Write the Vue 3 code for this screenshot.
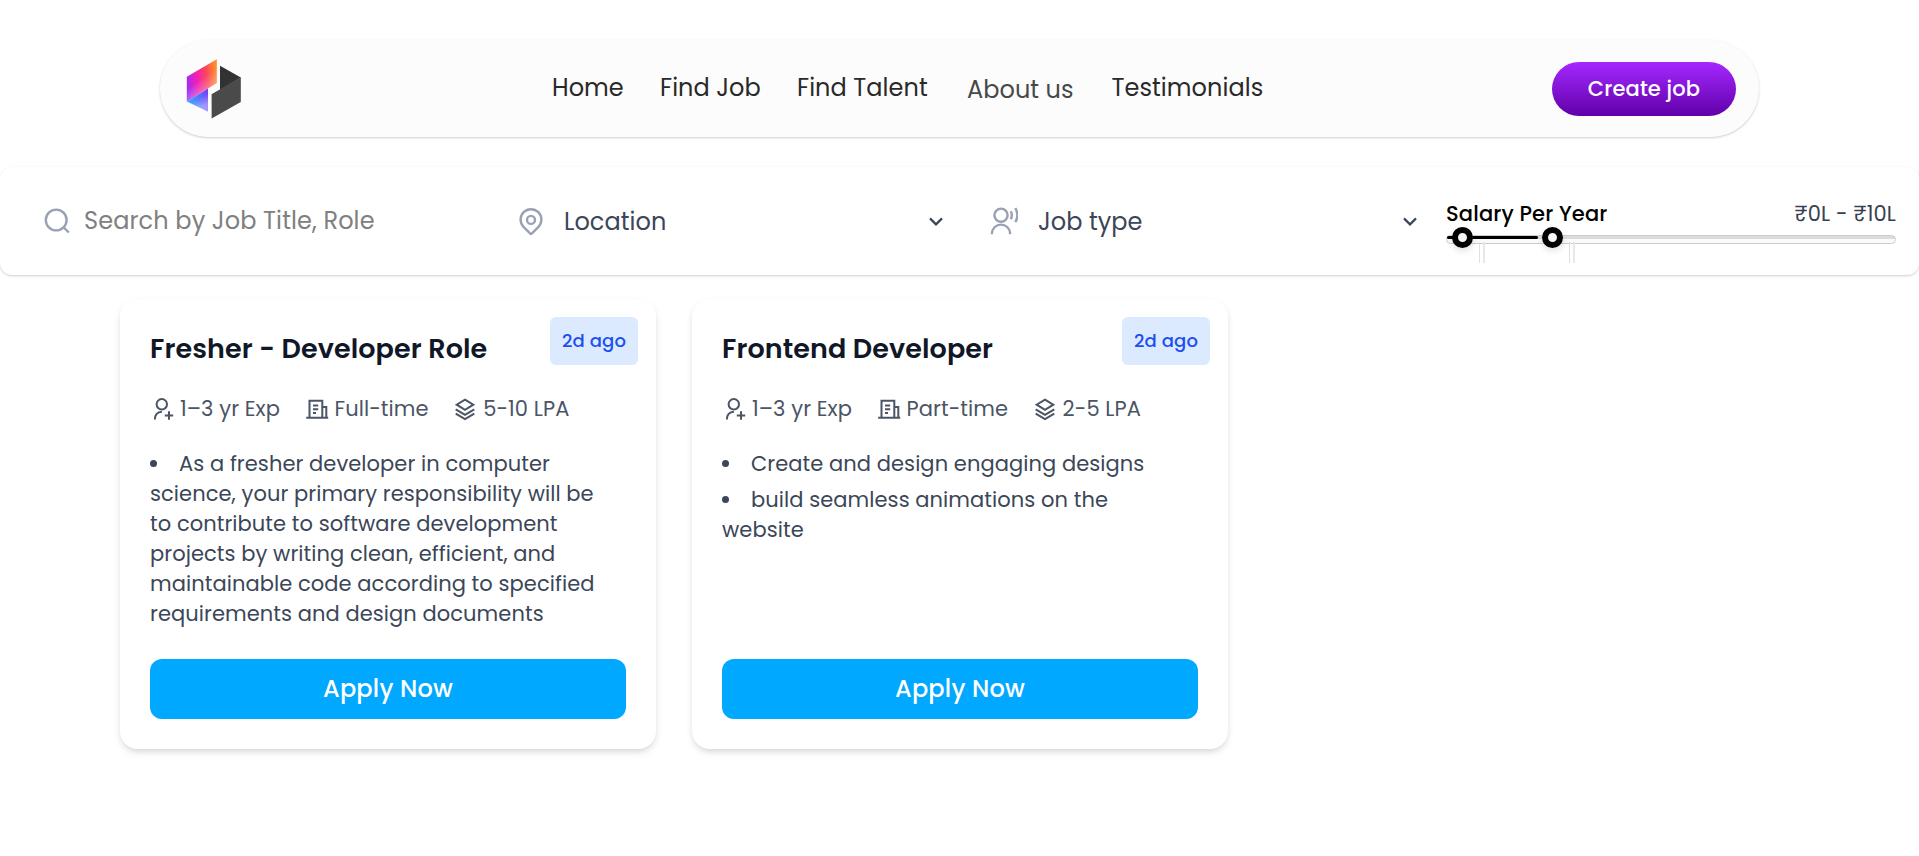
<script setup>
const links = [
  { label: 'Home' },
  { label: 'Find Job' },
  { label: 'Find Talent' },
  { label: 'About us', fading: true },
  { label: 'Testimonials' },
]

const salary = { low: 16.5, high: 106.5, fill: 91 }

const jobs = [
  {
    title: 'Fresher - Developer Role',
    exp: '1–3 yr Exp',
    type: 'Full-time',
    pay: '5-10 LPA',
    points: [
      'As a fresher developer in computer science, your primary responsibility will be to contribute to software development projects by writing clean, efficient, and maintainable code according to specified requirements and design documents',
    ],
  },
  {
    title: 'Frontend Developer',
    exp: '1–3 yr Exp',
    type: 'Part-time',
    pay: '2-5 LPA',
    points: ['Create and design engaging designs', 'build seamless animations on the website'],
  },
]
</script>

<template>
  <div class="page">
    <header class="navbar">
      <svg class="logo" viewBox="0 0 56 62">
        <defs>
          <linearGradient id="warm" x1="0" y1="0.6" x2="1" y2="0.35">
            <stop offset="0" stop-color="#a02cf5" />
            <stop offset="0.35" stop-color="#f31fb4" />
            <stop offset="0.68" stop-color="#fb4658" />
            <stop offset="1" stop-color="#ff8a2b" />
          </linearGradient>
          <linearGradient id="sheen" x1="0.2" y1="0.2" x2="0.55" y2="0.9">
            <stop offset="0.45" stop-color="#fff" stop-opacity="0" />
            <stop offset="1" stop-color="#fff" stop-opacity="0.4" />
          </linearGradient>
          <linearGradient id="cool" x1="0" y1="0.5" x2="1" y2="0.4">
            <stop offset="0" stop-color="#35b0ff" />
            <stop offset="0.6" stop-color="#5872ff" />
            <stop offset="1" stop-color="#7440fa" />
          </linearGradient>
        </defs>
        <path d="M.8 18.7 30.8 1.3V25L.8 43.5Z" fill="url(#warm)" />
        <path d="M.8 18.7 30.8 1.3V25L.8 43.5Z" fill="url(#sheen)" />
        <path d="M.8 43.5 22 30.6v23Z" fill="url(#cool)" />
        <path d="M.8 43.5 22 30.6v23Z" fill="url(#sheen)" />
        <path d="M34 7.8 54.8 19.5 34 32Z" fill="#323232" />
        <path d="M25.6 36.3 54.8 19.3v24.6L25.6 60.4Z" fill="#4a4a4a" />
      </svg>
      <nav class="links">
        <a v-for="l in links" :key="l.label" :class="{ fading: l.fading }">{{ l.label }}</a>
      </nav>
      <button class="create">Create job</button>
    </header>

    <section class="filters">
      <div class="field search">
        <svg class="ico" viewBox="0 0 28 28"><circle cx="13.2" cy="13" r="10.4" /><path d="m20.8 20.5 5 5" /></svg>
        <span class="hint">Search by Job Title, Role</span>
      </div>
      <div class="field location">
        <svg class="ico" viewBox="0 0 28 28"><path d="M14 27.3 6.5 19.8a10.4 10.4 0 1 1 15 0Z" /><circle cx="14" cy="12.9" r="4" /></svg>
        <span class="label">Location</span>
        <svg class="chev" viewBox="0 0 14 9"><path d="m1 1.4 6 6 6-6" /></svg>
      </div>
      <div class="field type">
        <svg class="ico" viewBox="0 0 28 28"><circle cx="11" cy="8.2" r="6.6" /><path d="M1.9 27.3v-.6a9.1 9.1 0 0 1 18.2 0v.6M20.8 4.2q2 4 0 8M25.3 1.2q4.2 7 0 14" /></svg>
        <span class="label">Job type</span>
        <svg class="chev" viewBox="0 0 14 9"><path d="m1 1.4 6 6 6-6" /></svg>
      </div>
      <div class="salary">
        <div class="salary-head">
          <span class="name">Salary Per Year</span>
          <span class="range">₹0L - ₹10L</span>
        </div>
        <div class="slider">
          <i class="fill" :style="{ width: salary.fill + 'px' }"></i>
          <i v-for="x in [salary.low, salary.high]" :key="x" class="thumb" :style="{ left: x + 'px' }"></i>
          <i v-for="x in [salary.low, salary.high]" :key="'t' + x" class="tick" :style="{ left: x + 15.5 + 'px' }"></i>
        </div>
      </div>
    </section>

    <main class="cards">
      <article v-for="job in jobs" :key="job.title" class="card">
        <span class="age">2d ago</span>
        <h2>{{ job.title }}</h2>
        <div class="meta">
          <span class="item">
            <svg viewBox="0 0 24 24"><circle cx="11.8" cy="7.3" r="5.2" /><path d="M4.900 22.600c0-4.600 2.600-7.700 7-7.900M19 14.300v8.400M14.800 18.500h8.400" /></svg>
            {{ job.exp }}
          </span>
          <span class="item">
            <svg viewBox="0 0 24 24"><path d="M1.200 20.800h22M4.500 20V3.800h12.800V20M17.300 10h4V20M8 8.400h5.200M8 12.200h5.200M8 16h3" /></svg>
            {{ job.type }}
          </span>
          <span class="item">
            <svg viewBox="0 0 24 24"><path d="m12 2.600 8.300 5.100L12 12.800 3.700 7.700ZM2.700 12.400l9.300 5.500 9.300-5.500M2.700 16.600l9.300 5.500 9.300-5.500" /></svg>
            {{ job.pay }}
          </span>
        </div>
        <ul>
          <li v-for="point in job.points" :key="point">{{ point }}</li>
        </ul>
        <button class="apply">Apply Now</button>
      </article>
    </main>
  </div>
</template>

<style>
body {
  background: #fff;
}
</style>

<style scoped>
.page {
  box-sizing: border-box;
  height: 856px;
  padding-top: 40px;
  overflow: hidden;
  background: #fff;
  font-family: Poppins, Inter, "Noto Sans", sans-serif;
}
button {
  border: 0;
  padding: 0;
  font-family: inherit;
  color: #fff;
}
.navbar {
  display: flex;
  align-items: center;
  box-sizing: border-box;
  height: 97px;
  margin: 0 160px;
  padding: 0 23px 0 26px;
  border-radius: 49px;
  background: #fcfcfc;
  box-shadow: 0 1px 3px rgba(0, 0, 0, 0.1), 0 1px 2px rgba(0, 0, 0, 0.1);
}
.logo {
  width: 56px;
  height: 62px;
}
.links {
  display: grid;
  grid-template-columns: 108px 137px 170px 144.5px 160px;
  margin-left: 310px;
}
.links a {
  margin: -1px 0 1px;
  font-size: 24px;
  line-height: 36px;
  letter-spacing: 0.06px;
  color: #292929;
  white-space: nowrap;
}
.links a.fading {
  margin: 1px 0 -1px;
  color: #484848;
}
.create {
  width: 184px;
  height: 54px;
  margin-left: auto;
  border-radius: 27px;
  background: linear-gradient(#a528ff, #6000a8);
  font-size: 21px;
  font-weight: 500;
  letter-spacing: 0.15px;
}
.filters {
  display: grid;
  grid-template-columns: 474px 472px 457px 450px;
  box-sizing: border-box;
  height: 108px;
  margin-top: 30px;
  padding-left: 43px;
  border-radius: 12px;
  background: #fff;
  box-shadow: 0 1px 3px rgba(0, 0, 0, 0.1), 0 1px 2px rgba(0, 0, 0, 0.1);
}
.field {
  display: flex;
  align-items: center;
}
.ico {
  width: 28px;
  height: 28px;
  fill: none;
  stroke: #98a2b3;
  stroke-width: 2.4;
}
.hint,
.label {
  font-size: 24px;
  line-height: 36px;
  white-space: nowrap;
}
.hint {
  margin: -1px 0 0 13px;
  color: #808080;
  letter-spacing: 0.12px;
}
.label {
  margin-top: 1px;
  color: #3b4658;
  letter-spacing: 0.06px;
}
.location .label {
  margin-left: 19px;
}
.type .label {
  margin-left: 20px;
}
.type .ico {
  margin-left: 1px;
}
.chev {
  width: 14px;
  height: 9px;
  margin-left: auto;
  fill: none;
  stroke: #3b4658;
  stroke-width: 2.2;
}
.location .chev {
  margin-right: 46px;
}
.type .chev {
  margin-right: 29px;
}
.salary {
  padding-top: 31px;
}
.salary-head {
  display: flex;
  justify-content: space-between;
  font-size: 21px;
  line-height: 31px;
}
.name {
  color: #000;
  font-weight: 500;
  letter-spacing: 0.14px;
}
.range {
  color: #374151;
  letter-spacing: 0.1px;
}
.slider {
  position: relative;
  box-sizing: border-box;
  height: 9px;
  margin-top: 6px;
  border: 1px solid #cbcbcb;
  border-radius: 5px;
  background: linear-gradient(#dcdcdc 3px, #fafafa 3px);
}
.fill,
.thumb,
.tick {
  position: absolute;
  box-sizing: border-box;
}
.fill {
  left: 0;
  top: 0;
  height: 3px;
  border-radius: 2px;
  background: #000;
}
.thumb {
  top: 1.5px;
  z-index: 1;
  width: 21px;
  height: 21px;
  margin: -10.5px 0 0 -11.5px;
  border: 6px solid #000;
  border-radius: 50%;
  background: #f5f5f5;
  box-shadow: 0 3px 6px rgba(0, 0, 0, 0.12);
}
.tick {
  top: 6px;
  width: 6px;
  height: 21px;
  border-left: 1px solid #e0e0e0;
  border-right: 2px solid #e8e8e8;
}
.cards {
  display: grid;
  grid-template-columns: 536px 536px;
  gap: 36px;
  padding: 24px 120px 0;
}
.card {
  position: relative;
  display: flex;
  flex-direction: column;
  box-sizing: border-box;
  height: 450px;
  padding: 30px;
  border-radius: 18px;
  background: #fff;
  box-shadow: 0 4px 9px -1px rgba(0, 0, 0, 0.1), 0 3px 6px -2px rgba(0, 0, 0, 0.1);
}
.age {
  position: absolute;
  top: 18px;
  right: 18px;
  width: 88px;
  height: 48px;
  border-radius: 6px;
  background: #dbeafe;
  color: #1d4ff0;
  font-size: 18px;
  font-weight: 500;
  line-height: 47px;
  text-align: center;
  letter-spacing: 0.15px;
}
h2 {
  margin: 0;
  color: #101828;
  font-size: 27px;
  font-weight: 600;
  line-height: 40px;
  letter-spacing: 0.09px;
  white-space: nowrap;
}
.meta {
  display: flex;
  gap: 24.5px;
  margin-top: 25px;
  color: #4b5565;
  font-size: 21px;
  line-height: 30px;
  letter-spacing: 0.08px;
  white-space: nowrap;
}
.item {
  display: flex;
  align-items: center;
  gap: 6px;
}
.item svg {
  width: 24px;
  height: 24px;
  fill: none;
  stroke: #4b5565;
  stroke-width: 2;
}
ul {
  margin: 25px 0 0;
  padding: 0;
  list-style: none;
  color: #3b4658;
  font-size: 21px;
  line-height: 30px;
  letter-spacing: 0.07px;
}
li {
  padding-right: 10px;
}
li + li {
  margin-top: 6px;
}
li::before {
  content: "";
  display: inline-block;
  width: 7px;
  height: 7px;
  margin-right: 22px;
  border-radius: 50%;
  background: #3b4658;
  vertical-align: 4px;
}
.apply {
  height: 60px;
  margin-top: auto;
  padding-bottom: 2px;
  border-radius: 12px;
  background: #00a8ff;
  font-size: 24px;
  font-weight: 500;
  letter-spacing: 0.2px;
}
</style>
